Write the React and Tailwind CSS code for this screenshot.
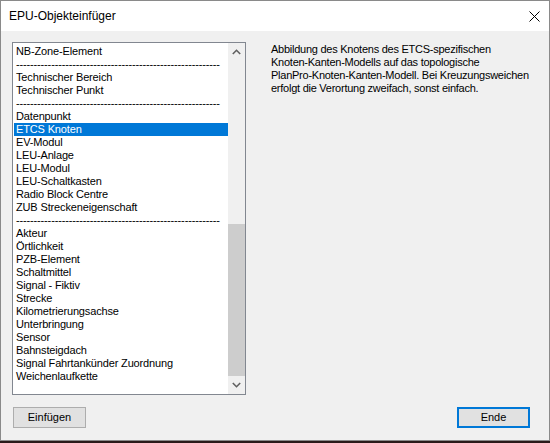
import React from "react";

const items = [
  "NB-Zone-Element",
  "-",
  "Technischer Bereich",
  "Technischer Punkt",
  "-",
  "Datenpunkt",
  "ETCS Knoten",
  "EV-Modul",
  "LEU-Anlage",
  "LEU-Modul",
  "LEU-Schaltkasten",
  "Radio Block Centre",
  "ZUB Streckeneigenschaft",
  "-",
  "Akteur",
  "Örtlichkeit",
  "PZB-Element",
  "Schaltmittel",
  "Signal - Fiktiv",
  "Strecke",
  "Kilometrierungsachse",
  "Unterbringung",
  "Sensor",
  "Bahnsteigdach",
  "Signal Fahrtankünder Zuordnung",
  "Weichenlaufkette",
];

const DASHES = "----------------------------------------------------------";

function Chevron({ up }) {
  return (
    <svg width="9" height="6" viewBox="0 0 9 6">
      <polyline
        points={up ? "0.8,5 4.5,1.3 8.2,5" : "0.8,1 4.5,4.7 8.2,1"}
        fill="none"
        stroke="#606060"
        strokeWidth="1.6"
      />
    </svg>
  );
}

export default function App() {
  return (
    <div
      className="w-[550px] h-[443px] flex flex-col bg-[#2a1a1a] overflow-hidden"
      style={{ fontFamily: '"Liberation Sans", Arial, sans-serif' }}
    >
      <div className="w-[550px] h-[441px] border border-[#8a8a8a] flex flex-col bg-[#f0f0f0]">
        {/* Title bar */}
        <div className="h-[30px] bg-white flex items-center justify-between pl-[8px] pr-[9px] shrink-0">
          <span className="text-[12px] text-black leading-none">EPU-Objekteinfüger</span>
          <svg width="11" height="11" viewBox="0 0 11 11">
            <path d="M0.5 0.5 L10.5 10.5 M10.5 0.5 L0.5 10.5" stroke="#000" strokeWidth="1" />
          </svg>
        </div>
        {/* Body */}
        <div className="flex-1 flex flex-col bg-[#f0f0f0]">
          <div className="flex mt-[11px] ml-[11px]">
            {/* List box */}
            <div className="w-[234px] h-[353px] border border-[#828790] bg-white flex">
              <div className="w-[215px] pl-[1px] pt-[2px] overflow-hidden">
                {items.map((it, i) => {
                  const sel = it === "ETCS Knoten";
                  return (
                    <div
                      key={i}
                      className={
                        "h-[13px] leading-[13px] text-[11px] tracking-[-0.15px] pl-[2px] whitespace-nowrap overflow-hidden " +
                        (sel ? "bg-[#0078d7] text-white" : "text-black")
                      }
                    >
                      {it === "-" ? DASHES : it}
                    </div>
                  );
                })}
              </div>
              <div className="w-[17px] h-full bg-[#f0f0f0] flex flex-col">
                <div className="h-[17px] flex items-center justify-center">
                  <Chevron up />
                </div>
                <div className="h-[164px]" />
                <div className="h-[152px] bg-[#cdcdcd]" />
                <div className="flex-1 flex items-center justify-center">
                  <Chevron />
                </div>
              </div>
            </div>
            {/* Description */}
            <div className="ml-[25px] pt-[1px] text-[11px] leading-[13px] tracking-[-0.25px] text-black whitespace-nowrap">
              Abbildung des Knotens des ETCS-spezifischen
              <br />
              Knoten-Kanten-Modells auf das topologische
              <br />
              PlanPro-Knoten-Kanten-Modell. Bei Kreuzungsweichen
              <br />
              erfolgt die Verortung zweifach, sonst einfach.
            </div>
          </div>
          {/* Buttons */}
          <div className="flex justify-between mt-[12px] pl-[12px] pr-[19px]">
            <div className="w-[73px] h-[21px] bg-[#e1e1e1] border border-[#adadad] flex items-center justify-center text-[11px] text-black">
              Einfügen
            </div>
            <div className="w-[73px] h-[21px] bg-[#e1e1e1] border-2 border-[#0078d7] flex items-center justify-center text-[11px] text-black">
              Ende
            </div>
          </div>
        </div>
      </div>
    </div>
  );
}
